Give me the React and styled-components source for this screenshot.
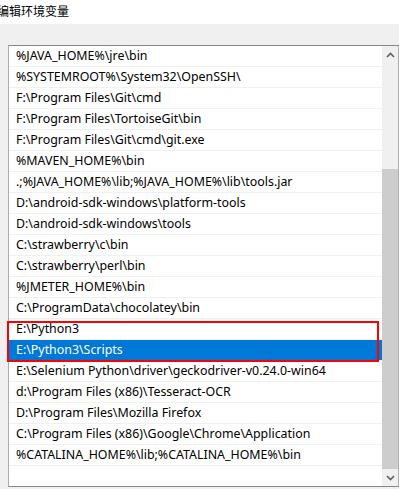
import React from 'react';
import styled, { createGlobalStyle } from 'styled-components';

const GlobalStyle = createGlobalStyle`
  html, body {
    margin: 0;
    padding: 0;
    background: #f0f0f0;
    overflow: hidden;
  }
  body {
    font-family: "Noto Sans", "Noto Sans CJK SC", sans-serif;
  }
`;

const Page = styled.div`
  width: 399px;
  height: 489px;
  display: flex;
  flex-direction: column;
  background: #f0f0f0;
`;

const TitleBar = styled.div`
  height: 24px;
  background: #ffffff;
  display: flex;
  align-items: center;
`;

const Title = styled.span`
  margin-left: -3px;
  margin-top: -4px;
  font-family: "Noto Sans CJK SC", sans-serif;
  font-size: 12px;
  color: #000;
`;

const Body = styled.div`
  padding: 21px 0 0 8px;
`;

const ListBox = styled.div`
  width: 391px;
  height: 442px;
  box-sizing: border-box;
  border: 1px solid #adadad;
  border-top-color: #828790;
  border-bottom-color: #828790;
  background: #ffffff;
  display: flex;
`;

const List = styled.div`
  position: relative;
  width: 373px;
  display: flex;
  flex-direction: column;
`;

const Row = styled.div`
  height: 20px;
  line-height: 20px;
  border-bottom: 1px solid #f0f0f0;
  padding-left: 7px;
  font-size: 12.4px;
  white-space: nowrap;
  overflow: hidden;
  color: ${p => (p.$selected ? '#ffffff' : '#000000')};
  background: ${p => (p.$selected ? '#0078d7' : 'transparent')};
`;

const Highlight = styled.div`
  position: absolute;
  left: -2px;
  top: 275px;
  width: 372px;
  height: 41px;
  box-sizing: border-box;
  border: 2px solid #ff0000;
  pointer-events: none;
`;

const ScrollBar = styled.div`
  width: 16px;
  display: flex;
  flex-direction: column;
  background: #f0f0f0;
`;

const ArrowButton = styled.div`
  height: 17px;
  display: flex;
  align-items: center;
  justify-content: center;
`;

const Track = styled.div`
  flex: 1;
  display: flex;
  flex-direction: column;
  justify-content: flex-end;
`;

const Thumb = styled.div`
  height: ${p => p.$size}px;
  background: #cdcdcd;
`;

const Chevron = ({ up }) => (
  <svg width="9" height="6" viewBox="0 0 9 6">
    <path
      d={up ? 'M1 5 L4.5 1.5 L8 5' : 'M1 1 L4.5 4.5 L8 1'}
      fill="none"
      stroke="#606060"
      strokeWidth="1.6"
    />
  </svg>
);

const paths = [
  '%JAVA_HOME%\\jre\\bin',
  '%SYSTEMROOT%\\System32\\OpenSSH\\',
  'F:\\Program Files\\Git\\cmd',
  'F:\\Program Files\\TortoiseGit\\bin',
  'F:\\Program Files\\Git\\cmd\\git.exe',
  '%MAVEN_HOME%\\bin',
  '.;%JAVA_HOME%\\lib;%JAVA_HOME%\\lib\\tools.jar',
  'D:\\android-sdk-windows\\platform-tools',
  'D:\\android-sdk-windows\\tools',
  'C:\\strawberry\\c\\bin',
  'C:\\strawberry\\perl\\bin',
  '%JMETER_HOME%\\bin',
  'C:\\ProgramData\\chocolatey\\bin',
  'E:\\Python3',
  'E:\\Python3\\Scripts',
  'E:\\Selenium Python\\driver\\geckodriver-v0.24.0-win64',
  'd:\\Program Files (x86)\\Tesseract-OCR',
  'D:\\Program Files\\Mozilla Firefox',
  'C:\\Program Files (x86)\\Google\\Chrome\\Application',
  '%CATALINA_HOME%\\lib;%CATALINA_HOME%\\bin',
];

export default function App() {
  return (
    <Page>
      <GlobalStyle />
      <TitleBar>
        <Title>编辑环境变量</Title>
      </TitleBar>
      <Body>
        <ListBox>
          <List>
            {paths.map((p, i) => (
              <Row key={i} $selected={i === 14}>{p}</Row>
            ))}
            <Highlight />
          </List>
          <ScrollBar>
            <ArrowButton><Chevron up /></ArrowButton>
            <Track>
              <Thumb $size={300} />
            </Track>
            <ArrowButton><Chevron /></ArrowButton>
          </ScrollBar>
        </ListBox>
      </Body>
    </Page>
  );
}
